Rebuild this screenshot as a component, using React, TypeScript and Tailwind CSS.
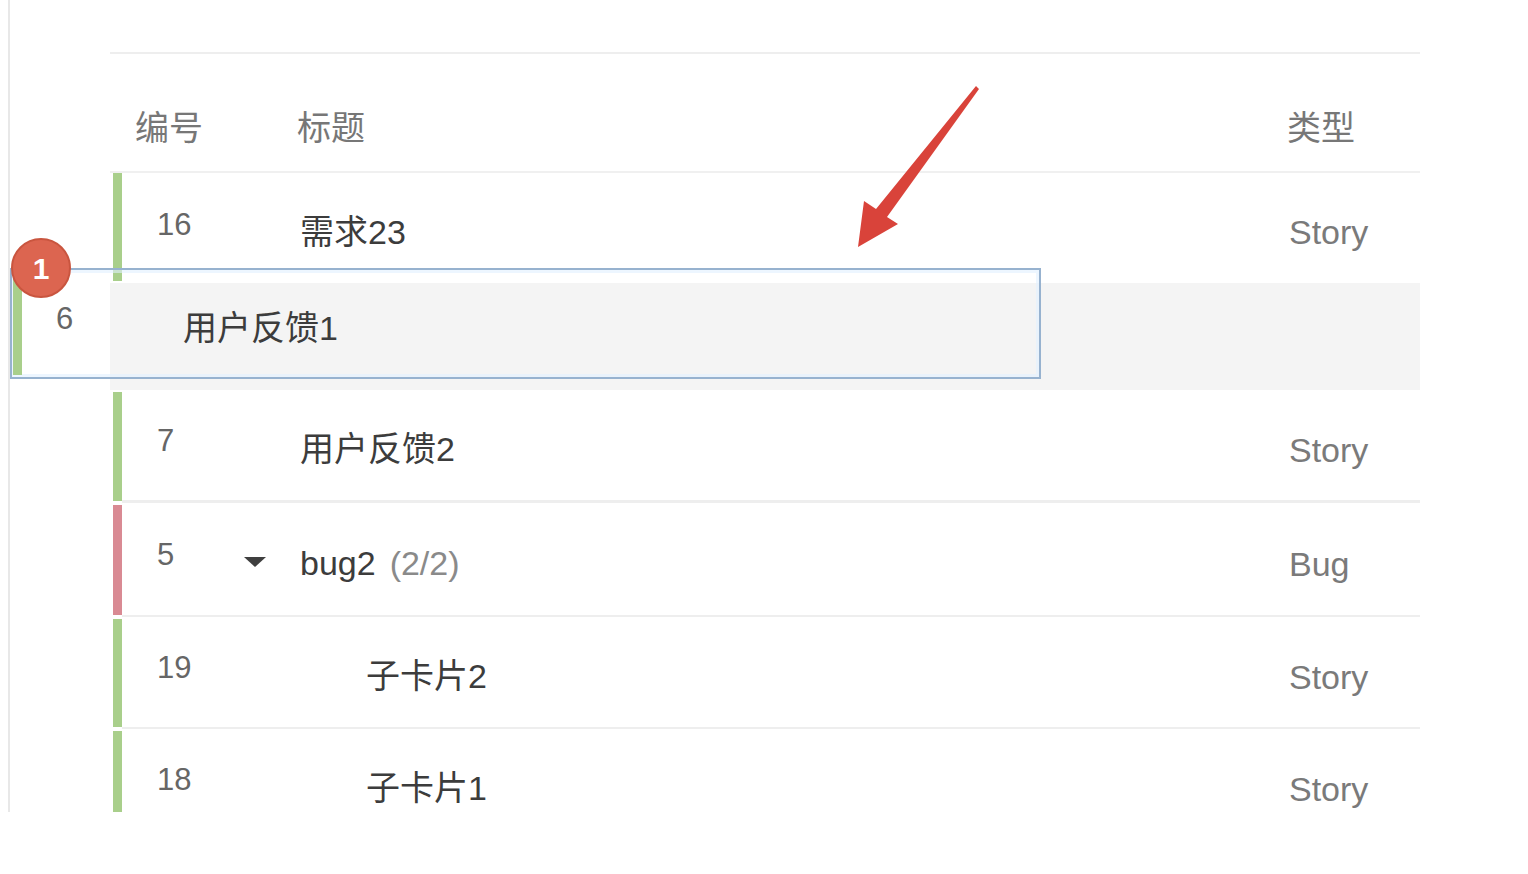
import React from 'react';

type Row = {
  id: string;
  title: string;
  count?: string;
  type: string;
  bar: string;
  indent?: boolean;
  caret?: boolean;
  thick?: boolean;
  h: string;
};

const ROWS: Row[] = [
  { id: '7', title: '用户反馈2', type: 'Story', bar: 'bg-[#a9cf8b]', thick: true, h: 'h-[113px]' },
  { id: '5', title: 'bug2', count: '(2/2)', type: 'Bug', bar: 'bg-[#d98a93]', caret: true, h: 'h-[114px]' },
  { id: '19', title: '子卡片2', type: 'Story', bar: 'bg-[#a9cf8b]', indent: true, h: 'h-[112px]' },
  { id: '18', title: '子卡片1', type: 'Story', bar: 'bg-[#a9cf8b]', indent: true, h: 'h-[112px]' },
];

const font = { fontFamily: '"Liberation Sans", "Noto Sans CJK SC", sans-serif' };

const TableRow: React.FC<{ row: Row }> = ({ row }) => (
  <div className={`flex ${row.h}`}>
    <div className={`ml-[3px] w-[9px] my-[2px] ${row.bar}`} />
    <div
      className={`flex flex-1 items-center ${row.thick ? 'border-b-[3px]' : 'border-b-2'} border-[#eeeeee]`}
    >
      <span className="w-[178px] pl-[35px] pb-[8px] text-[31px] text-[#666]">{row.id}</span>
      <div className={`flex flex-1 items-center pt-[8px] ${row.indent ? 'pl-[66px]' : ''}`}>
        {row.caret && (
          <svg className="-ml-[57px] mr-[33px] mb-[2px]" width="24" height="12" viewBox="0 0 24 12">
            <path d="M1 1 L23 1 L12 11 Z" fill="#3f3f3f" />
          </svg>
        )}
        <span className="text-[34px] text-[#3c3c3c]">{row.title}</span>
        {row.count && <span className="ml-[14px] text-[34px] text-[#8a8a8a]">{row.count}</span>}
      </div>
      <span className="w-[131px] pt-[10px] text-[34px] text-[#7a7a7a]">{row.type}</span>
    </div>
  </div>
);

export default function App() {
  return (
    <div className="relative h-[874px] w-[1528px] overflow-hidden bg-white" style={font}>
      <div className="ml-[8px] h-[812px] w-[1412px] overflow-hidden border-l-2 border-[#e8e8e8] pl-[100px] pt-[52px]">
        <div className="w-[1310px] border-t-2 border-[#eeeeee]">
          {/* header */}
          <div className="flex h-[119px] items-center border-b-2 border-[#f0f0f0] pt-[32px] text-[34px] text-[#777]">
            <span className="w-[187px] pl-[25px]">编号</span>
            <span className="flex-1">标题</span>
            <span className="w-[133px]">类型</span>
          </div>

          {/* row 16 */}
          <div className="flex h-[110px]">
            <div className="ml-[3px] mb-[2px] w-[9px] bg-[#a9cf8b]" />
            <div className="flex flex-1 items-center">
              <span className="w-[178px] pl-[35px] pb-[6px] text-[31px] text-[#666]">16</span>
              <span className="flex-1 pt-[8px] text-[34px] text-[#3c3c3c]">需求23</span>
              <span className="w-[131px] pt-[8px] text-[34px] text-[#7a7a7a]">Story</span>
            </div>
          </div>

          {/* drop placeholder */}
          <div className="h-[107px] bg-[#f4f4f4]" />

          {ROWS.map((r) => (
            <TableRow key={r.id} row={r} />
          ))}
        </div>
      </div>

      {/* dragged card */}
      <div className="absolute left-[10px] top-[268px] flex h-[111px] w-[1031px] border-2 border-[#97b2cf] shadow-[inset_0_0_0_3px_rgba(225,240,255,0.6)]">
        <div className="my-[2px] ml-[1px] w-[9px] bg-[#a9cf8b]" />
        <div className="flex flex-1 items-center">
          <span className="w-[161px] pl-[34px] pb-[8px] text-[31px] text-[#666]">6</span>
          <span className="pt-[10px] text-[34px] text-[#3c3c3c]">用户反馈1</span>
        </div>
      </div>

      {/* step badge */}
      <div className="absolute left-[11px] top-[238px] flex h-[60px] w-[60px] items-center justify-center rounded-full border-2 border-[#c9553f] bg-[#dc6550] text-[30px] font-bold text-white">
        1
      </div>

      {/* annotation arrow */}
      <svg className="absolute left-0 top-0" width="1528" height="874" viewBox="0 0 1528 874">
        <polygon
          points="976,86 979,89 887,217 898,224 858,247 864,201 876,209"
          fill="#d9433a"
        />
      </svg>
    </div>
  );
}
